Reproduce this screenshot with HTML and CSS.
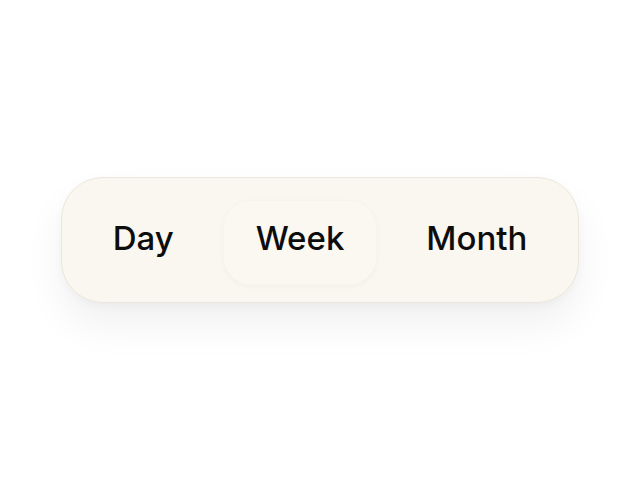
FILE: index.html
```html
<!DOCTYPE html>
<html>
<head>
<meta charset="utf-8">
<link rel="stylesheet" href="styles.css">
</head>
<body>
<div class="stage">
  <div class="seg">
    <div class="item">Day</div>
    <div class="item active">Week</div>
    <div class="item">Month</div>
  </div>
</div>
</body>
</html>
```
FILE: styles.css
```css
html, body { margin: 0; padding: 0; background: #ffffff; }
.stage {
  width: 640px;
  height: 479px;
  display: flex;
  align-items: center;
  justify-content: center;
}
.seg {
  display: flex;
  align-items: center;
  gap: 16px;
  padding: 22px 18px 17px 18px;
  background: #f9f7ef;
  border: 1.5px solid #ebe7dc;
  border-radius: 42px;
  box-shadow: 0 22px 40px rgba(0,0,0,0.06), 0 4px 10px rgba(0,0,0,0.03);
}
.item {
  font-family: Inter, "Noto Sans", sans-serif;
  font-size: 33px;
  font-weight: 500;
  color: #0d0d0d;
  padding: 0 33px 8px;
  height: 85px;
  display: flex;
  align-items: center;
  border-radius: 28px;
  box-sizing: border-box;
}
.item.active {
  background: #faf8f1;
  box-shadow: 0 2px 6px rgba(0,0,0,0.03), inset 0 0 0 1px rgba(0,0,0,0.015);
}
```
